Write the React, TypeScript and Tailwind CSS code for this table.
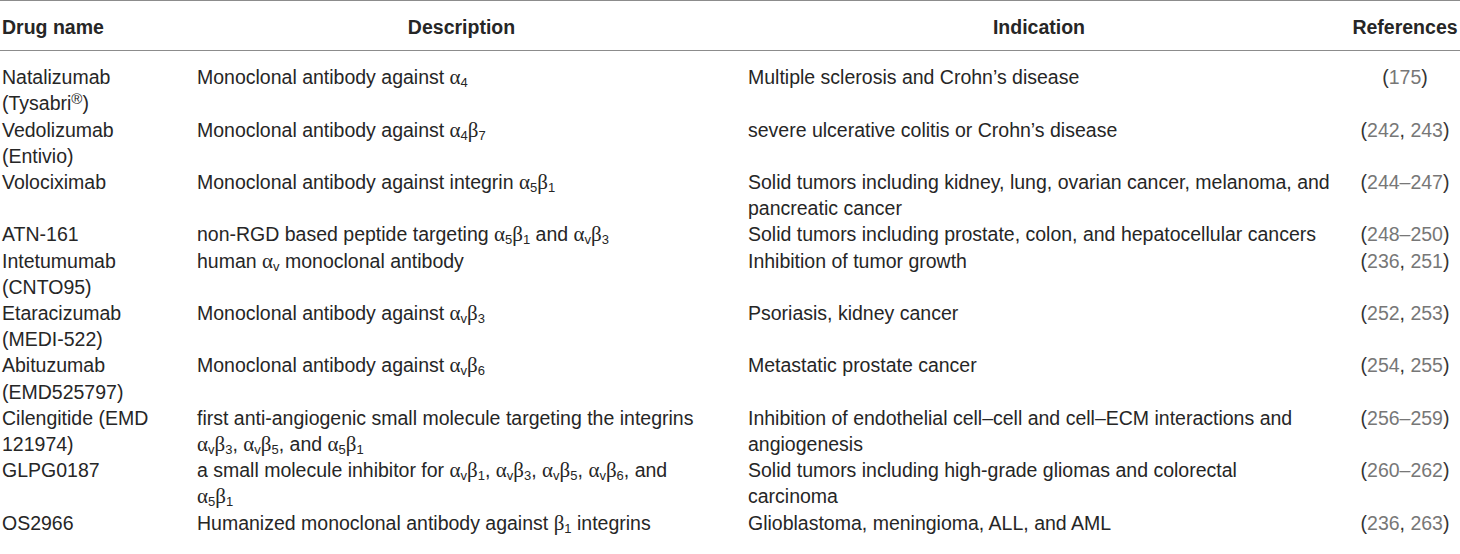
import React from "react"

// Greek letters set in a serif face, like the reference table
function A({ s }: { s: string }) {
  return (
    <span>
      <span className="font-['Liberation_Serif',serif] text-[21px]">α</span>
      <span className="text-[13px] align-[-3px] leading-none">{s}</span>
    </span>
  )
}

function B({ s }: { s: string }) {
  return (
    <span>
      <span className="font-['Liberation_Serif',serif] text-[21px]">β</span>
      <span className="text-[13px] align-[-3px] leading-none">{s}</span>
    </span>
  )
}

function Refs({ items }: { items: string[] }) {
  return (
    <span className="text-[#333]">
      (
      {items.map((r, i) => (
        <React.Fragment key={i}>
          {i > 0 && <span>, </span>}
          <span className="text-[#777]">{r}</span>
        </React.Fragment>
      ))}
      )
    </span>
  )
}

type Row = {
  drug: React.ReactNode
  desc: React.ReactNode
  ind: React.ReactNode
  refs: string[]
}

const rows: Row[] = [
  {
    drug: (
      <>
        Natalizumab
        <br />
        (Tysabri<span className="text-[15px] align-[6px] leading-none">®</span>)
      </>
    ),
    desc: (
      <>
        Monoclonal antibody against <A s="4" />
      </>
    ),
    ind: "Multiple sclerosis and Crohn’s disease",
    refs: ["175"],
  },
  {
    drug: (
      <>
        Vedolizumab
        <br />
        (Entivio)
      </>
    ),
    desc: (
      <>
        Monoclonal antibody against <A s="4" />
        <B s="7" />
      </>
    ),
    ind: "severe ulcerative colitis or Crohn’s disease",
    refs: ["242", "243"],
  },
  {
    drug: "Volociximab",
    desc: (
      <>
        Monoclonal antibody against integrin <A s="5" />
        <B s="1" />
      </>
    ),
    ind: (
      <>
        Solid tumors including kidney, lung, ovarian cancer, melanoma, and
        <br />
        pancreatic cancer
      </>
    ),
    refs: ["244–247"],
  },
  {
    drug: "ATN-161",
    desc: (
      <>
        non-RGD based peptide targeting <A s="5" />
        <B s="1" /> and <A s="v" />
        <B s="3" />
      </>
    ),
    ind: "Solid tumors including prostate, colon, and hepatocellular cancers",
    refs: ["248–250"],
  },
  {
    drug: (
      <>
        Intetumumab
        <br />
        (CNTO95)
      </>
    ),
    desc: (
      <>
        human <A s="v" /> monoclonal antibody
      </>
    ),
    ind: "Inhibition of tumor growth",
    refs: ["236", "251"],
  },
  {
    drug: (
      <>
        Etaracizumab
        <br />
        (MEDI-522)
      </>
    ),
    desc: (
      <>
        Monoclonal antibody against <A s="v" />
        <B s="3" />
      </>
    ),
    ind: "Psoriasis, kidney cancer",
    refs: ["252", "253"],
  },
  {
    drug: (
      <>
        Abituzumab
        <br />
        (EMD525797)
      </>
    ),
    desc: (
      <>
        Monoclonal antibody against <A s="v" />
        <B s="6" />
      </>
    ),
    ind: "Metastatic prostate cancer",
    refs: ["254", "255"],
  },
  {
    drug: (
      <>
        Cilengitide (EMD
        <br />
        121974)
      </>
    ),
    desc: (
      <>
        first anti-angiogenic small molecule targeting the integrins
        <br />
        <A s="v" />
        <B s="3" />, <A s="v" />
        <B s="5" />, and <A s="5" />
        <B s="1" />
      </>
    ),
    ind: (
      <>
        Inhibition of endothelial cell–cell and cell–ECM interactions and
        <br />
        angiogenesis
      </>
    ),
    refs: ["256–259"],
  },
  {
    drug: "GLPG0187",
    desc: (
      <>
        a small molecule inhibitor for <A s="v" />
        <B s="1" />, <A s="v" />
        <B s="3" />, <A s="v" />
        <B s="5" />, <A s="v" />
        <B s="6" />, and
        <br />
        <A s="5" />
        <B s="1" />
      </>
    ),
    ind: (
      <>
        Solid tumors including high-grade gliomas and colorectal
        <br />
        carcinoma
      </>
    ),
    refs: ["260–262"],
  },
  {
    drug: "OS2966",
    desc: (
      <>
        Humanized monoclonal antibody against <B s="1" /> integrins
      </>
    ),
    ind: "Glioblastoma, meningioma, ALL, and AML",
    refs: ["236", "263"],
  },
]

export default function App() {
  return (
    <div className="w-[1460px] h-[554px] bg-white overflow-hidden font-['Liberation_Sans',Arial,sans-serif] text-[19.5px] leading-[26.2px] text-[#262626]">
      <table className="w-full table-fixed border-collapse">
        <colgroup>
          <col className="w-[195px]" />
          <col className="w-[551px]" />
          <col className="w-[604px]" />
          <col className="w-[110px]" />
        </colgroup>
        <thead>
          <tr className="border-t border-b border-[#8c8c8c]">
            <th className="pl-[2px] pr-[20px] pt-[13px] pb-[10px] text-left font-bold">Drug name</th>
            <th className="pl-[2px] pr-[20px] pt-[13px] pb-[10px] text-center font-bold">Description</th>
            <th className="pl-[2px] pr-[20px] pt-[13px] pb-[10px] text-center font-bold">Indication</th>
            <th className="pl-0 pr-0 pt-[13px] pb-[10px] text-center font-bold whitespace-nowrap">References</th>
          </tr>
        </thead>
        <tbody>
          {rows.map((r, i) => {
            const pt = i === 0 ? "pt-[13px]" : "pt-0"
            return (
              <tr key={i} className="align-top">
                <td className={`pl-[2px] pr-[20px] ${pt} whitespace-nowrap`}>{r.drug}</td>
                <td className={`pl-[2px] pr-[20px] ${pt} whitespace-nowrap`}>{r.desc}</td>
                <td className={`pl-[2px] pr-[20px] ${pt} whitespace-nowrap`}>{r.ind}</td>
                <td className={`pl-0 pr-0 ${pt} text-center whitespace-nowrap`}>
                  <Refs items={r.refs} />
                </td>
              </tr>
            )
          })}
        </tbody>
      </table>
    </div>
  )
}
